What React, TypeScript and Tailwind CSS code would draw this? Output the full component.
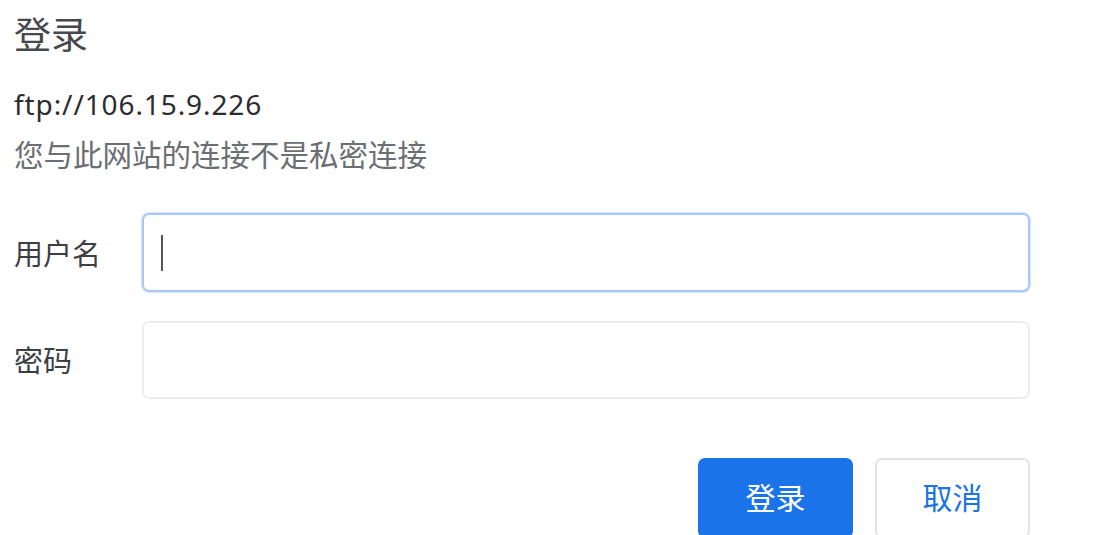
import React from "react";

const cjk = { fontFamily: '"Noto Sans CJK SC", "Noto Sans", sans-serif' };
const latin = { fontFamily: '"Noto Sans", "Noto Sans CJK SC", sans-serif' };

export default function App() {
  return (
    <div className="w-[1101px] h-[535px] bg-white overflow-hidden">
      <div className="w-[1030px] pl-[14px] flex flex-col" style={cjk}>
        <div className="h-[66px] leading-[66px] text-[37px] text-[#45484c]">登录</div>
        <div className="mt-[18px] h-[40px] leading-[40px] text-[28px] tracking-[0.9px] text-[#2b2d30]" style={latin}>
          ftp://106.15.9.226
        </div>
        <div className="mt-[9px] h-[40px] leading-[40px] text-[29.5px] text-[#6b6e72]">
          您与此网站的连接不是私密连接
        </div>
        <div className="mt-[40px] h-[79px] flex items-center">
          <div className="w-[128px] text-[29px] text-[#3c4043]">用户名</div>
          <div className="flex-1 h-full rounded-[7px] border-2 border-[#a9c8f5] shadow-[0_0_1px_1px_rgba(169,200,245,0.5)] flex items-center pl-[17px]">
            <div className="w-[2px] h-[36px] bg-[#555]" />
          </div>
        </div>
        <div className="mt-[29px] h-[78px] flex items-center">
          <div className="w-[128px] text-[29px] text-[#3c4043]">密码</div>
          <div className="flex-1 h-full rounded-[7px] border-2 border-[#ededed]" />
        </div>
        <div className="mt-[59px] h-[80px] flex justify-end gap-[22px]">
          <button className="w-[155px] h-full rounded-[7px] bg-[#1a73e8] text-white text-[30px] pb-[4px]" style={cjk}>
            登录
          </button>
          <button className="w-[155px] h-full rounded-[7px] bg-white border-2 border-[#e3e3e3] text-[#1a73e8] text-[30px] pb-[4px]" style={cjk}>
            取消
          </button>
        </div>
      </div>
    </div>
  );
}
